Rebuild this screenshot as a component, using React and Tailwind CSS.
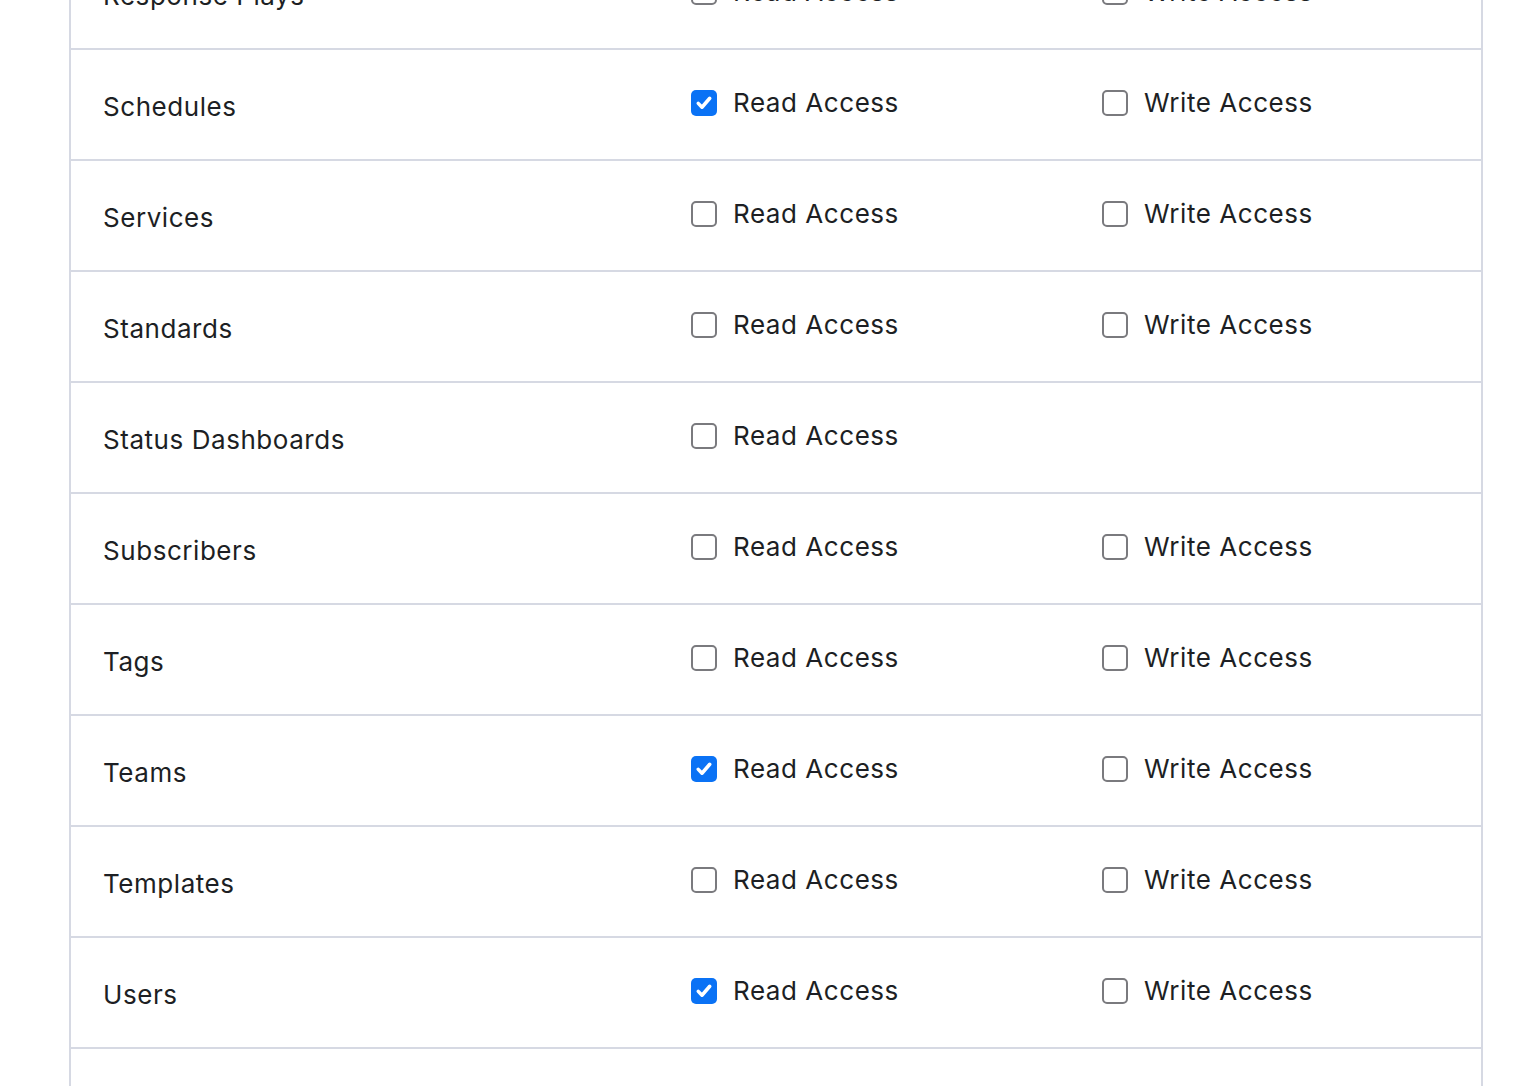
import { useState } from 'react';

const rows = [
  { name: 'Response Plays', read: false, write: false },
  { name: 'Schedules', read: true, write: false },
  { name: 'Services', read: false, write: false },
  { name: 'Standards', read: false, write: false },
  { name: 'Status Dashboards', read: false, write: null },
  { name: 'Subscribers', read: false, write: false },
  { name: 'Tags', read: false, write: false },
  { name: 'Teams', read: true, write: false },
  { name: 'Templates', read: false, write: false },
  { name: 'Users', read: true, write: false },
  { name: 'Webhooks', read: false, write: false },
];

function Check({ checked, label, onChange }) {
  return (
    <label className="flex items-center gap-[16px] cursor-pointer select-none">
      {checked ? (
        <span className="flex items-center justify-center w-[26px] h-[26px] rounded-[5px] bg-[#0a72f5]">
          <svg width="20" height="20" viewBox="0 0 16 16" fill="none">
            <path d="M3.4 8.3l3 3.1 6.2-7.2" stroke="white" strokeWidth="2.8" strokeLinecap="round" strokeLinejoin="round" />
          </svg>
        </span>
      ) : (
        <span className="w-[26px] h-[26px] rounded-[5px] border-2 border-[#7a7a7e] bg-white" />
      )}
      <input type="checkbox" className="hidden" checked={checked} onChange={onChange} />
      <span>{label}</span>
    </label>
  );
}

export default function App() {
  const [perms, setPerms] = useState(rows);

  const toggle = (i, key) =>
    setPerms((p) => p.map((r, j) => (j === i ? { ...r, [key]: !r[key] } : r)));

  return (
    <div className="h-screen overflow-hidden bg-white font-['Inter',sans-serif] text-[26px] tracking-[0.55px] text-[#1d1f24]">
      <div className="ml-[69px] mr-[47px] -mt-[61px] border-x-2 border-[#d6d9e3]">
        {perms.map((r, i) => (
          <div key={r.name} className="flex items-center h-[111px] border-b-2 border-[#d6d9e3] pl-[32px]">
            <div className="w-[588px] pt-[3px]">{r.name}</div>
            <div className="w-[411px] pb-[4px]">
              <Check checked={r.read} label="Read Access" onChange={() => toggle(i, 'read')} />
            </div>
            <div className="pb-[4px]">
              {r.write !== null && (
                <Check checked={r.write} label="Write Access" onChange={() => toggle(i, 'write')} />
              )}
            </div>
          </div>
        ))}
      </div>
    </div>
  );
}
